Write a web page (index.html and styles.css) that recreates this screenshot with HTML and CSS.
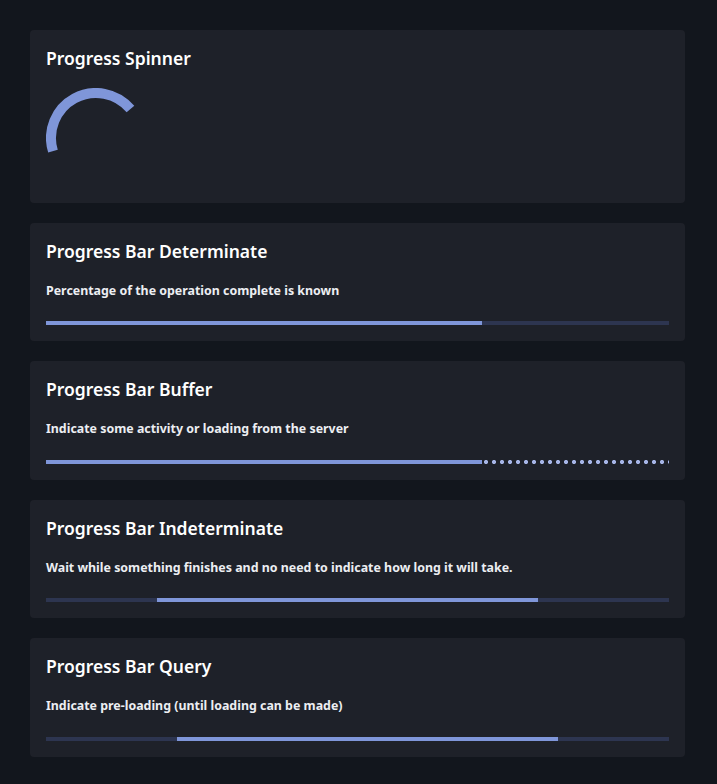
FILE: index.html
```html
<!DOCTYPE html>
<html>
<head>
<meta charset="utf-8">
<link rel="stylesheet" href="styles.css">
</head>
<body>
<main class="page">
  <section class="card card-spinner">
    <h2 class="title">Progress Spinner</h2>
    <svg class="spinner" width="100" height="100" viewBox="0 0 100 100">
      <path d="M 6.97 63.16 A 45 45 0 0 1 84.47 21.07" fill="none" stroke="#7f96d9" stroke-width="10"/>
    </svg>
  </section>
  <section class="card">
    <h2 class="title">Progress Bar Determinate</h2>
    <p class="desc">Percentage of the operation complete is known</p>
    <div class="track"><div class="fill" style="width:70%"></div></div>
  </section>
  <section class="card">
    <h2 class="title">Progress Bar Buffer</h2>
    <p class="desc">Indicate some activity or loading from the server</p>
    <div class="track track-buffer"><div class="fill" style="width:70%"></div><div class="dots"></div></div>
  </section>
  <section class="card">
    <h2 class="title">Progress Bar Indeterminate</h2>
    <p class="desc">Wait while something finishes and no need to indicate how long it will take.</p>
    <div class="track"><div class="fill" style="margin-left:17.8%;width:61.2%"></div></div>
  </section>
  <section class="card">
    <h2 class="title">Progress Bar Query</h2>
    <p class="desc">Indicate pre-loading (until loading can be made)</p>
    <div class="track"><div class="fill" style="margin-left:21%;width:61.2%"></div></div>
  </section>
</main>
</body>
</html>
```
FILE: styles.css
```css
html, body {
  margin: 0;
  padding: 0;
  background: #12161d;
}
body {
  font-family: "Noto Sans", "Open Sans", sans-serif;
  color: #f3f4f6;
}
.page {
  display: flex;
  flex-direction: column;
  gap: 20px;
  padding: 30px 32px 30px 30px;
}
.card {
  background: #1e2129;
  border-radius: 4px;
  padding: 16px;
  display: flex;
  flex-direction: column;
}
.card-spinner {
  padding-bottom: 15px;
}
.title {
  margin: 0;
  font-size: 17.5px;
  line-height: 24px;
  font-weight: 600;
  color: #ffffff;
}
.spinner {
  margin-top: 18px;
  display: block;
}
.desc {
  margin: 18px 0 20px;
  font-size: 12.4px;
  line-height: 20.4px;
  font-weight: 700;
  color: #eceef2;
}
.track {
  height: 4px;
  background: #2d3550;
  display: flex;
}
.fill {
  height: 100%;
  background: #7f96d9;
}
.track-buffer {
  background: transparent;
}
.dots {
  flex: 1;
  height: 100%;
  background-image: radial-gradient(circle at 4px 2px, #a6b5e6 2px, transparent 2.2px);
  background-size: 8px 4px;
  background-position: 0 0;
}
```
